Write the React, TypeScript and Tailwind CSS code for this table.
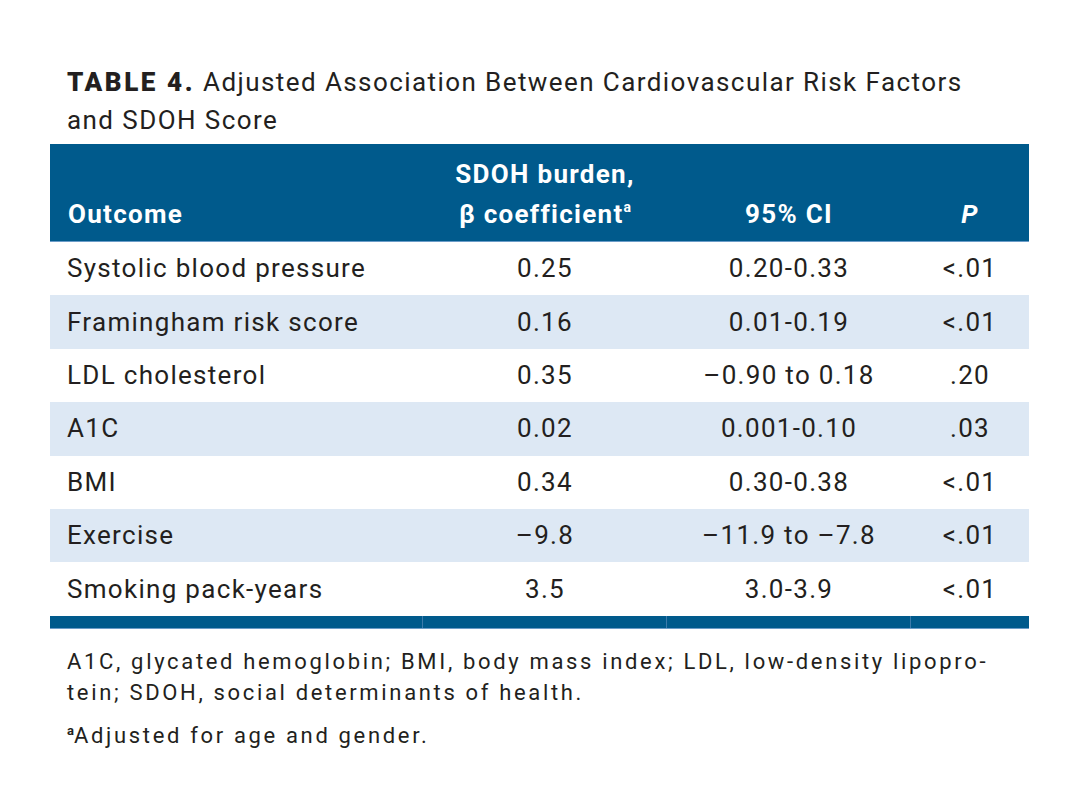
import React from 'react';

const rows = [
  ['Systolic blood pressure', '0.25', '0.20-0.33', '<.01'],
  ['Framingham risk score', '0.16', '0.01-0.19', '<.01'],
  ['LDL cholesterol', '0.35', '\u20130.90 to 0.18', '.20'],
  ['A1C', '0.02', '0.001-0.10', '.03'],
  ['BMI', '0.34', '0.30-0.38', '<.01'],
  ['Exercise', '\u20139.8', '\u201311.9 to \u20137.8', '<.01'],
  ['Smoking pack-years', '3.5', '3.0-3.9', '<.01'],
];

const cols = 'grid grid-cols-[373px_244px_244px_118px]';

const App: React.FC = () => {
  return (
    <div className="w-[1079px] h-[810px] bg-white text-[#231f20] font-['Roboto',sans-serif]">
      <div className="pl-[50px] pt-[63px] w-[1029px]">
        {/* Title */}
        <h1 className="pl-[17px] text-[26px] leading-[38px] font-normal tracking-[1.42px] whitespace-nowrap">
          <span className="font-black tracking-[2.6px]">TABLE 4.</span> Adjusted Association Between Cardiovascular Risk Factors
          <br />
          and SDOH Score
        </h1>

        {/* Table */}
        <div className="mt-[5px]">
          <div className={`${cols} h-[98px] bg-[#005a8c] border-b border-[#6b9cc8] text-white font-bold text-[26px] tracking-[1.3px] leading-[40px] items-end pb-[7px]`}>
            <div className="pl-[18px]">Outcome</div>
            <div className="text-center">
              SDOH burden,
              <br />
              β coefficient<sup className="text-[14px] top-[-11px] tracking-normal">a</sup>
            </div>
            <div className="text-center">95% CI</div>
            <div className="text-center italic">P</div>
          </div>

          {rows.map((r, i) => (
            <div
              key={r[0]}
              className={`${cols} h-[53.4px] items-center text-[26px] tracking-[1.3px] ${i % 2 === 1 ? 'bg-[#dde8f4]' : 'bg-white'}`}
            >
              <div className="pl-[17px]">{r[0]}</div>
              <div className="text-center">{r[1]}</div>
              <div className="text-center">{r[2]}</div>
              <div className="text-center">{r[3]}</div>
            </div>
          ))}

          <div className={`${cols} h-[13px] bg-[#005a8c] border-b border-[#6b9cc8]`}>
            <div className="border-r border-[#3d7bab]" />
            <div className="border-r border-[#3d7bab]" />
            <div className="border-r border-[#3d7bab]" />
            <div />
          </div>
        </div>

        {/* Footnotes */}
        <div className="pl-[17px] pt-[17px] text-[22px] leading-[31px] tracking-[2.66px] text-[#231f20] whitespace-nowrap">
          <p>A1C, glycated hemoglobin; BMI, body mass index; LDL, low-density lipopro-</p>
          <p>tein; SDOH, social determinants of health.</p>
          <p className="mt-[12px]">
            <sup className="text-[13px] font-bold top-[-8px] tracking-normal">a</sup>Adjusted for age and gender.
          </p>
        </div>
      </div>
    </div>
  );
};

export default App;
